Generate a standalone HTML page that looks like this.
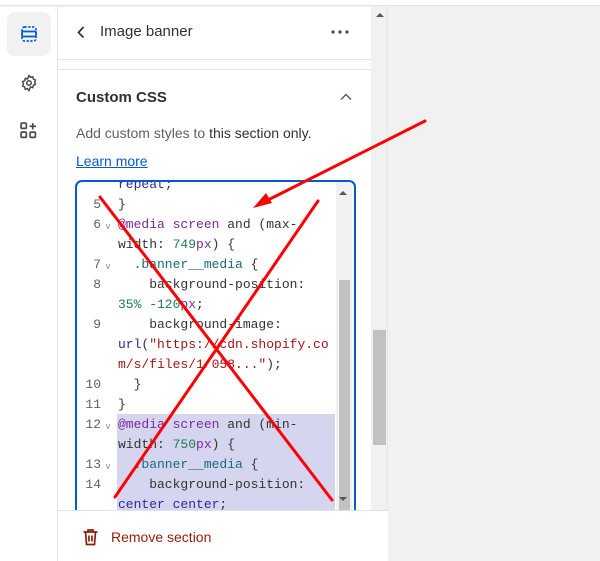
<!DOCTYPE html>
<html><head><meta charset="utf-8"><style>
*{margin:0;padding:0;box-sizing:border-box}
body{width:600px;height:561px;overflow:hidden;background:#f1f1f1;font-family:"Liberation Sans",sans-serif;position:relative}
.topline{position:absolute;left:0;top:0;width:600px;height:6px;background:#fff;border-bottom:1px solid #e3e3e3}
.rail{position:absolute;left:0;top:7px;width:58px;height:554px;background:#fff;border-right:1px solid #e3e3e3}
.panel{position:absolute;left:58px;top:7px;width:313px;height:554px;background:#fff}
.sb{position:absolute;left:371px;top:7px;width:17px;height:554px;background:#f1f1f1;border-right:1px solid #e6e6e6}
.sb .th{position:absolute;left:2px;top:323px;width:13px;height:115px;background:#c1c1c1}
.t{position:absolute;white-space:nowrap}
.code{position:absolute;left:75px;top:180px;width:281px;height:340px;border:2px solid #005bd3;border-bottom:none;border-radius:7px 7px 0 0;overflow:hidden;background:#fff}
.ln{position:absolute;font-family:"Liberation Mono",monospace;font-size:13px;line-height:20px;color:#616161;white-space:pre}
.footer{position:absolute;left:58px;top:510px;width:330px;height:51px;background:#fff;border-top:1px solid #e3e3e3}
.p{color:#7a2a9c}.g{color:#1f7a55}.b{color:#2a2a9e}.r{color:#a31515}.c{color:#1a6a7a}.k{color:#333}
</style></head><body>
<div class="topline"></div>
<div class="rail">
 <div style="position:absolute;left:7px;top:5px;width:44px;height:44px;background:#f1f1f1;border-radius:8px"></div>
 <svg style="position:absolute;left:20px;top:18px" width="18" height="18" viewBox="0 0 18 18" fill="none" stroke="#005bd3" stroke-width="1.7"><rect x="2" y="2" width="14" height="14" rx="2.5" stroke-dasharray="2.2 1.6"/><rect x="2" y="6.5" width="14" height="5" rx="1"/></svg>
 <svg style="position:absolute;left:20px;top:67px" width="18" height="18" viewBox="0 0 24 24" fill="none" stroke="#4a4a4a" stroke-width="2"><circle cx="12" cy="12" r="3"/><path d="M12 2l2 2.5 3-.8.8 3 2.7 1.3-1 2.9 1 2.9-2.7 1.3-.8 3-3-.8L12 22l-2-2.5-3 .8-.8-3L3.5 16l1-2.9-1-2.9L6.2 8.9l.8-3 3 .8z"/></svg>
 <svg style="position:absolute;left:20px;top:115px" width="17" height="17" viewBox="0 0 16 16" fill="none" stroke="#4a4a4a" stroke-width="1.6"><rect x="1" y="1" width="5" height="5" rx="1"/><rect x="1" y="9.5" width="5" height="5" rx="1"/><rect x="9.5" y="9.5" width="5" height="5" rx="1"/><path d="M12 1v6M9 4h6"/></svg>
</div>
<div class="panel">
 <svg style="position:absolute;left:19px;top:19px" width="8" height="13" viewBox="0 0 8 13" fill="none" stroke="#333" stroke-width="1.7"><path d="M6.5 1L1.5 6.5l5 5"/></svg>
 <div class="t" style="left:42px;top:16px;font-size:15px;color:#303030">Image banner</div>
 <svg style="position:absolute;left:273px;top:23px" width="18" height="4"><circle cx="2" cy="2" r="1.6" fill="#444"/><circle cx="9" cy="2" r="1.6" fill="#444"/><circle cx="16" cy="2" r="1.6" fill="#444"/></svg>
 <div style="position:absolute;left:0;top:52px;width:313px;height:11px;border-top:1px solid #e6e6e6;border-bottom:1px solid #e6e6e6"></div>
 <div class="t" style="left:18px;top:82px;font-size:15px;color:#303030;font-weight:bold">Custom CSS</div>
 <svg style="position:absolute;left:282px;top:86px" width="12" height="8" viewBox="0 0 12 8" fill="none" stroke="#555" stroke-width="1.4"><path d="M1 6.5l5-5 5 5"/></svg>
 <div class="t" style="left:18px;top:118px;font-size:14px;color:#616161">Add custom styles to <span style="color:#303030">this section only.</span></div>
 <div class="t" style="left:18px;top:146px;font-size:14px;color:#005bd3;text-decoration:underline">Learn more</div>
</div>
<div class="sb"><div style="position:absolute;left:5px;top:6px;border:4px solid transparent;border-bottom:4px solid #555;border-top:0"></div><div class="th"></div></div>
<div class="code">
 <div style="position:absolute;left:40px;top:232px;width:218px;height:110px;background:#d6d5ef"></div>
 <div style="position:absolute;left:259px;top:0;width:16px;height:340px;background:#f1f1f1"></div>
 <div style="position:absolute;left:262px;top:98px;width:11px;height:240px;background:#c1c1c1"></div>
 <div style="position:absolute;left:262px;top:9px;border:4px solid transparent;border-bottom:4px solid #555;border-top:0"></div>
 <div style="position:absolute;left:262px;top:315px;border:4px solid transparent;border-top:4px solid #555;border-bottom:0"></div>
 <div class="ln" style="left:2px;top:-7px;width:22px;text-align:right"><br>5<br>6<br><br>7<br>8<br><br>9<br><br><br>10<br>11<br>12<br><br>13<br>14</div>
 <div class="ln" style="left:23px;top:-5px;font-size:9px;line-height:20px;color:#888"><br><br>&nbsp;v<br><br>&nbsp;v<br><br><br><br><br><br><br><br>&nbsp;v<br><br>&nbsp;v</div>
 <div class="ln" style="left:41px;top:-7px"><span class="b">repeat</span><span class="k">;</span>
<span class="k">}</span>
<span class="p">@media screen</span><span class="k"> and (max-</span>
<span class="k">width: </span><span class="g">749</span><span class="p">px</span><span class="k">) {</span>
<span class="c">  .banner__media</span><span class="k"> {</span>
<span class="k">    background-position:</span>
<span class="g">35% -120</span><span class="p">px</span><span class="k">;</span>
<span class="k">    background-image:</span>
<span class="b">url</span><span class="k">(</span><span class="r">"https://cdn.shopify.co</span>
<span class="r">m/s/files/1/058..."</span><span class="k">);</span>
<span class="k">  }</span>
<span class="k">}</span>
<span class="p">@media screen</span><span class="k"> and (min-</span>
<span class="k">width: </span><span class="g">750</span><span class="p">px</span><span class="k">) {</span>
<span class="c">  .banner__media</span><span class="k"> {</span>
<span class="k">    background-position:</span>
<span class="b">center center</span><span class="k">;</span></div>
</div>
<div class="footer">
 <svg style="position:absolute;left:24px;top:17px" width="17" height="18" viewBox="0 0 17 18" fill="none" stroke="#8e1f0b" stroke-width="1.7"><path d="M1.5 4h14M6 4V2h5v2M3.5 4l1 12.5h8l1-12.5M7 7.5v6M10 7.5v6"/></svg>
 <div class="t" style="left:53px;top:18px;font-size:14px;color:#8e1f0b">Remove section</div>
</div>
<svg style="position:absolute;left:0;top:0" width="600" height="561">
 <g stroke="#f00" stroke-width="3" fill="none" stroke-linecap="round">
  <line x1="100" y1="197" x2="332" y2="500"/>
  <line x1="318" y1="201" x2="115" y2="497"/>
  <line x1="425" y1="121" x2="262" y2="203"/>
 </g>
 <polygon points="253,208 266,193 272,203" fill="#f00"/>
</svg>
</body></html>
